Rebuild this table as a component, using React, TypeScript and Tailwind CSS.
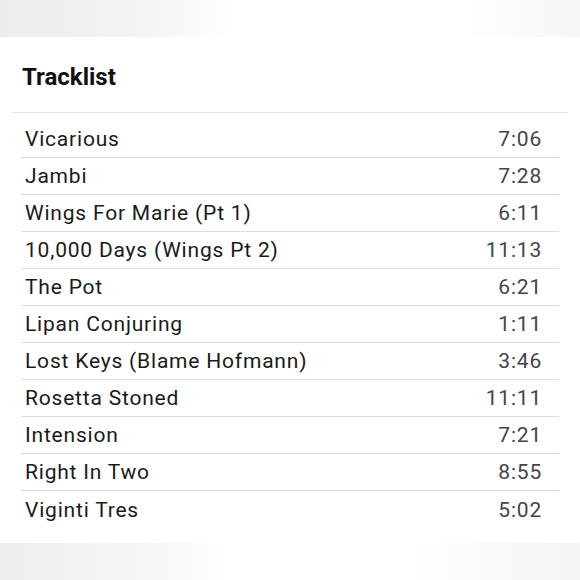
import React from "react";

const tracks: [string, string][] = [
  ["Vicarious", "7:06"],
  ["Jambi", "7:28"],
  ["Wings For Marie (Pt 1)", "6:11"],
  ["10,000 Days (Wings Pt 2)", "11:13"],
  ["The Pot", "6:21"],
  ["Lipan Conjuring", "1:11"],
  ["Lost Keys (Blame Hofmann)", "3:46"],
  ["Rosetta Stoned", "11:11"],
  ["Intension", "7:21"],
  ["Right In Two", "8:55"],
  ["Viginti Tres", "5:02"],
];

export default function App() {
  return (
    <div className="w-[580px] h-[580px] flex flex-col bg-white" style={{ fontFamily: "Roboto, sans-serif" }}>
      <div className="h-[37px] bg-[linear-gradient(90deg,#ececec_0%,#f4f4f4_25%,#ffffff_40%,#ffffff_80%,#f6f6f6_100%)]" />
      <div className="flex-1 flex flex-col bg-white">
        <div className="mx-[12px] h-[76px] border-b border-[#e2e2e2] flex items-center pl-[10px] pt-[4px]">
          <span className="text-[24px] font-bold text-[#111]">Tracklist</span>
        </div>
        <div className="mx-[21px] w-[538px] pt-[8px] flex flex-col">
          {tracks.map(([t, d], i) => (
            <div
              key={t}
              className={`h-[37px] flex items-center justify-between pl-[4px] pr-[17px] text-[21px] tracking-[0.8px] pt-[2px] ${i < tracks.length - 1 ? "border-b border-[#dedede]" : ""}`}
            >
              <span className="text-[#1a1a1a]">{t}</span>
              <span className="text-[#444]">{d}</span>
            </div>
          ))}
        </div>
      </div>
      <div className="h-[37px] bg-[linear-gradient(90deg,#eeeeee_0%,#f6f6f6_25%,#ffffff_40%,#ffffff_70%,#f4f4f4_100%)]" />
    </div>
  );
}
